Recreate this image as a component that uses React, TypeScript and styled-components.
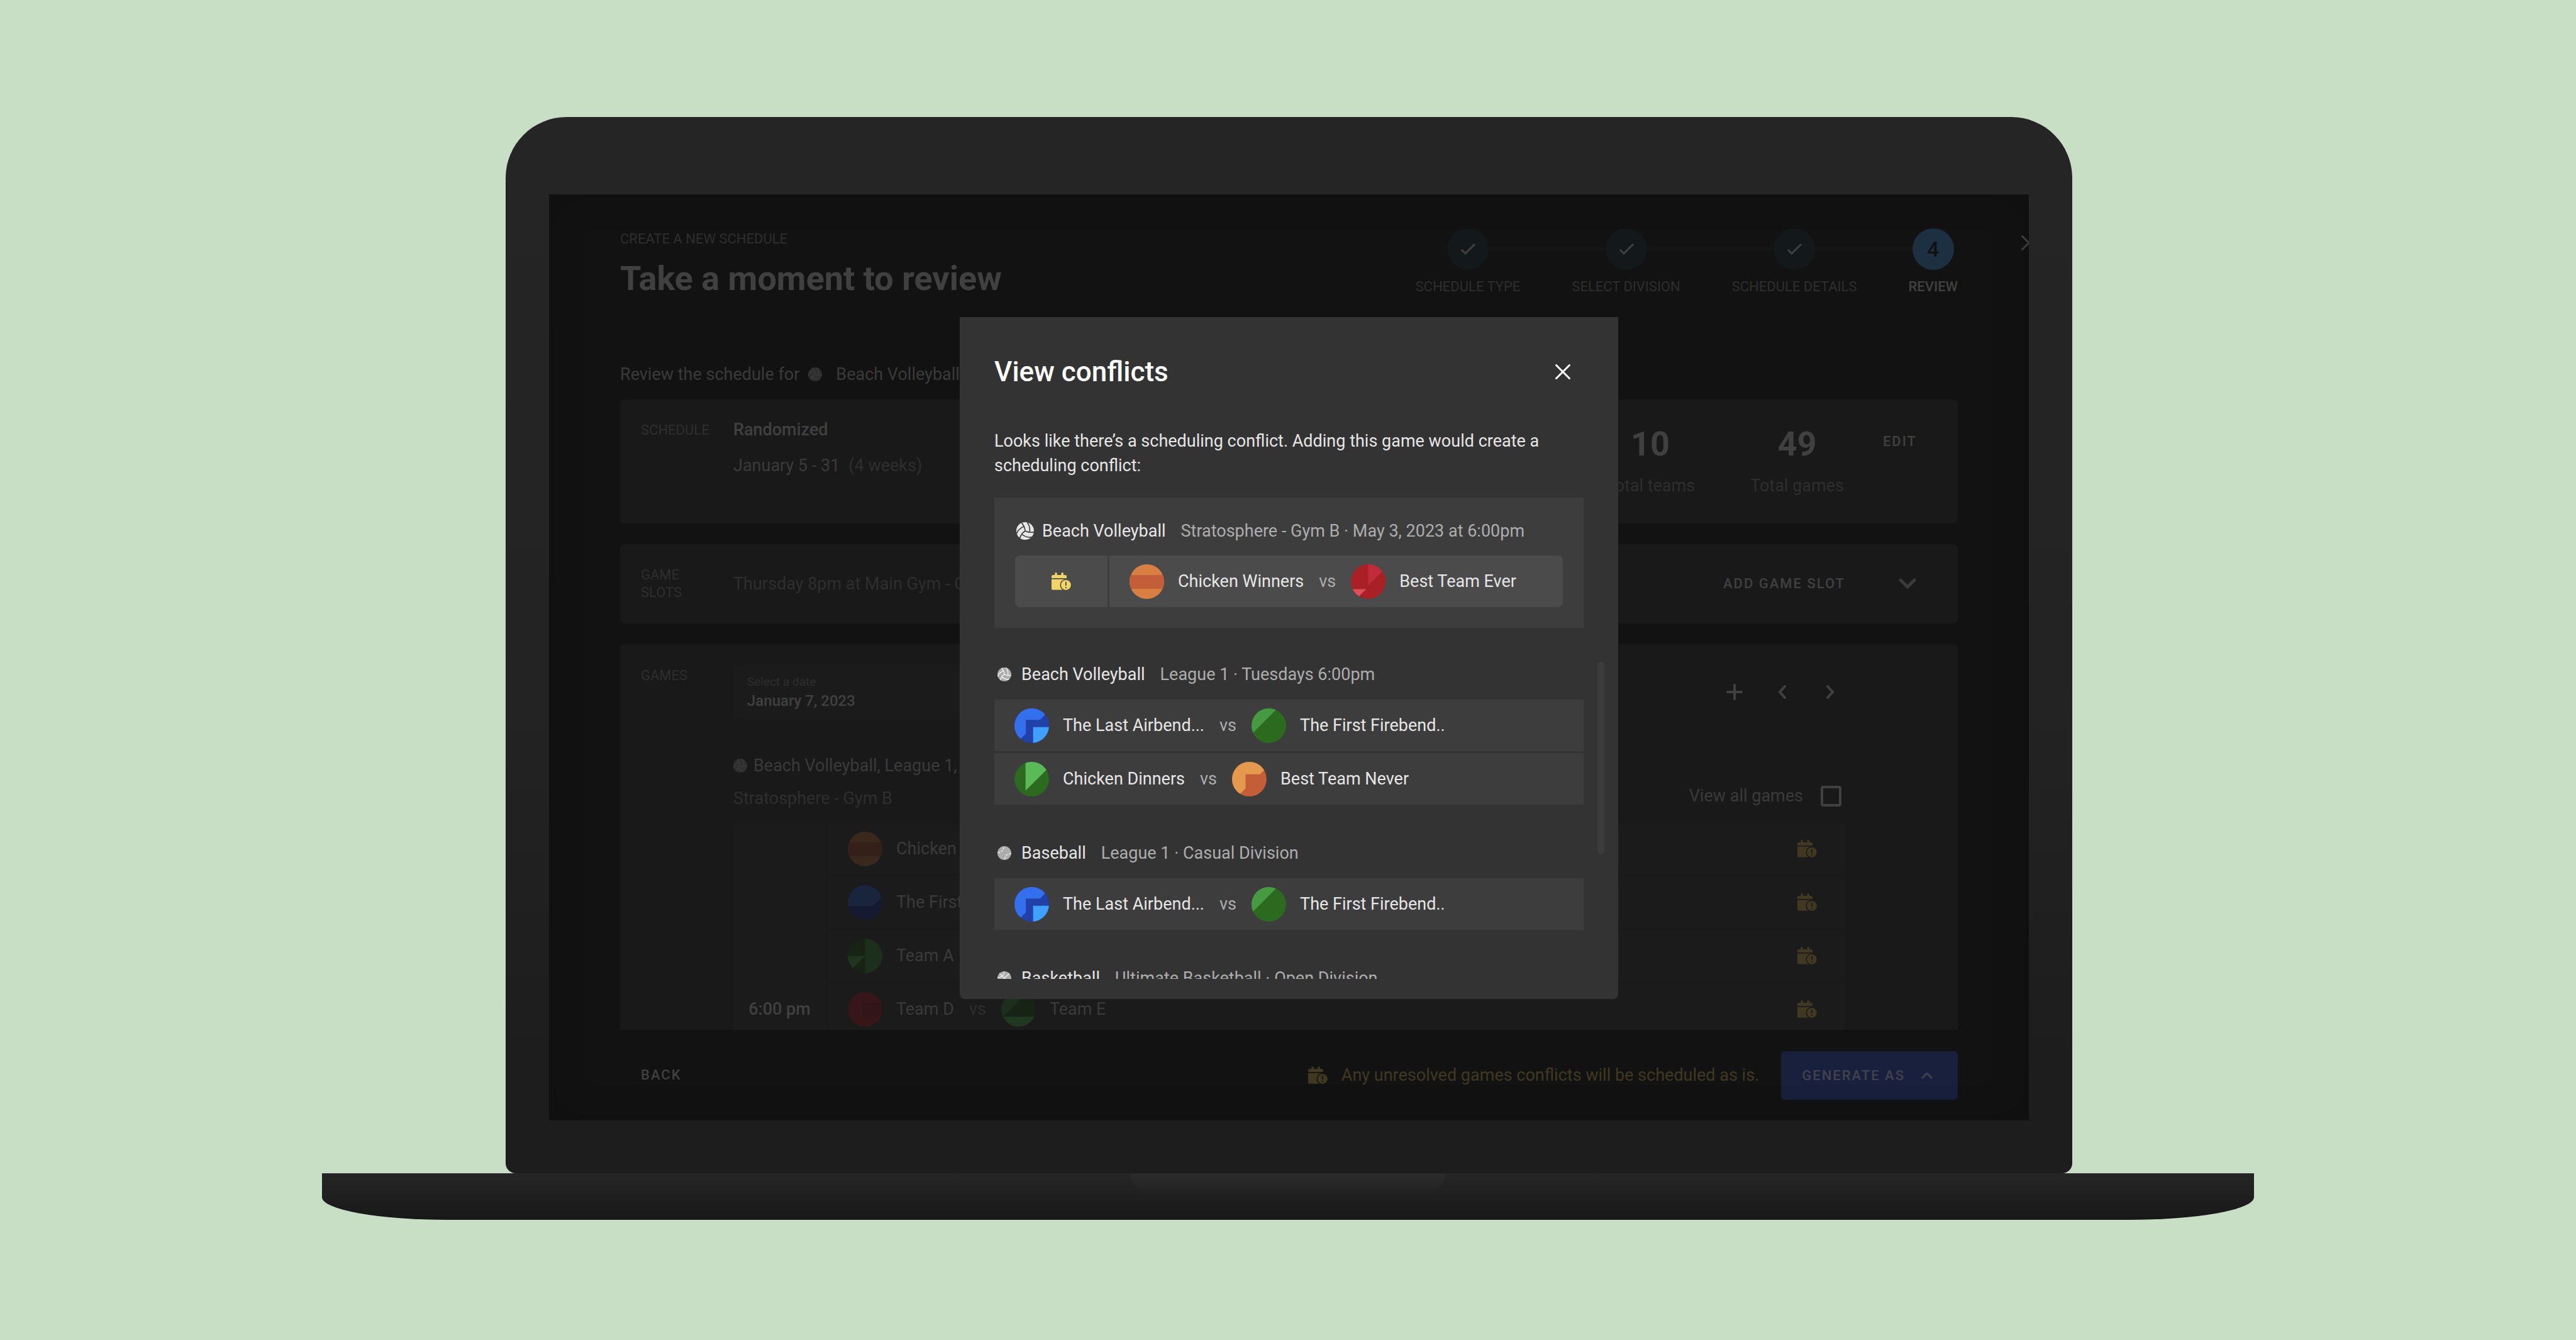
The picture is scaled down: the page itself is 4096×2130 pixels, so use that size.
import React, { useId } from "react";
import styled, { createGlobalStyle } from "styled-components";

const GlobalStyle = createGlobalStyle`
  *, *::before, *::after { box-sizing: border-box; }
  body { margin: 0; background: #c8dfc6; }
  body, button, input, select { font-family: Roboto, "Liberation Sans", sans-serif; }
  h1, h2, h3, p, dl, dd, dt, ul { margin: 0; padding: 0; }
  button { background: none; border: 0; padding: 0; cursor: pointer; }
`;

const ink = {
  strong: "#404040",
  medium: "#3a3a3a",
  soft: "#2e2e2e",
  card: "#191919",
  cell: "#1b1b1b",
  warning: "#403821",
};

/* ---------- Laptop ---------- */

const Stage = styled.div`
  min-height: 100vh;
  padding-top: 186px;
  background: #c8dfc6;
`;

const Laptop = styled.div`
  width: 75%;
  margin: 0 auto;
`;

const Lid = styled.div`
  margin: 0 289px 0 292px;
  padding: 123px 69px 84px;
  border-radius: 97px 97px 16px 16px;
  background: linear-gradient(#252525, #232323 55%, #1d1d1d 90%);
`;

const Base = styled.div`
  display: flex;
  justify-content: center;
  height: 74px;
  border-radius: 0 0 200px 200px / 0 0 36px 36px;
  background: linear-gradient(#262626, #181818);
`;

const Notch = styled.div`
  width: 500px;
  height: 37px;
  border-radius: 0 0 40px 40px;
  background: linear-gradient(#2c2c2c, #202020);
`;

const Screen = styled.div`
  position: relative;
  overflow: hidden;
  color: ${ink.medium};
  background: #121212;
  font-size: 27px;
  line-height: 40px;
`;

/* ---------- Page behind the dialog ---------- */

const Page = styled.div`
  padding: 54px 113px 0;
`;

const PageHeader = styled.header`
  display: flex;
  justify-content: space-between;
  align-items: flex-start;
  margin-bottom: 102px;
`;

const Heading = styled.div`
  display: grid;
  gap: 18px;
  padding-top: 2px;
`;

const Eyebrow = styled.p`
  color: ${ink.soft};
  font-size: 22px;
  line-height: 30px;
`;

const PageTitle = styled.h1`
  color: ${ink.strong};
  font-size: 54px;
  font-weight: 700;
  line-height: 60px;
`;

const Stepper = styled.ol`
  position: relative;
  display: flex;
  gap: 82px;
  margin: 0;
  padding: 0;
  list-style: none;

  &::before {
    content: "";
    position: absolute;
    top: 30px;
    left: 85px;
    right: 40px;
    height: 6px;
    background: #151515;
  }
`;

const Step = styled.li<{ $current?: boolean }>`
  position: relative;
  display: grid;
  justify-items: center;
  gap: 12px;
  color: ${(p) => (p.$current ? ink.strong : ink.soft)};
  font-size: 22px;
  font-weight: ${(p) => (p.$current ? 500 : 400)};
  line-height: 30px;
`;

const StepDot = styled.span<{ $current?: boolean }>`
  display: grid;
  place-items: center;
  width: 66px;
  height: 66px;
  border-radius: 50%;
  color: ${(p) => (p.$current ? "#111" : ink.strong)};
  background: ${(p) => (p.$current ? "#1d3042" : "#13181b")};
  font-size: 34px;
  font-weight: 500;
`;

const PageClose = styled.button`
  position: absolute;
  top: 64px;
  right: -13px;
  display: grid;
  color: ${ink.strong};
`;

const ReviewLine = styled.p`
  display: flex;
  align-items: center;
  gap: 22px;
  margin-bottom: 20px;
`;

const ReviewLead = styled.span`
  display: flex;
  align-items: center;
  gap: 14px;
`;

const Cards = styled.div`
  display: grid;
  gap: 33px;
`;

const Card = styled.section<{ $clip?: boolean }>`
  display: grid;
  grid-template-columns: 115px 1fr auto;
  column-gap: 32px;
  padding: ${(p) => (p.$clip ? "33px 33px 0" : "28px 65px 40px 33px")};
  height: ${(p) => (p.$clip ? "613px" : "auto")};
  overflow: hidden;
  border-radius: ${(p) => (p.$clip ? "8px 8px 0 0" : "8px")};
  background: ${ink.card};
`;

const SlotCard = styled(Card)`
  align-items: center;
  padding: 35px 65px 35px 33px;
`;

const CardLabel = styled.h2<{ $top?: number }>`
  padding-top: ${(p) => p.$top ?? 0}px;
  color: ${ink.soft};
  font-size: 22px;
  font-weight: 400;
  line-height: 28px;
`;

const Summary = styled.div`
  display: grid;
  align-content: start;
  gap: 17px;
`;

const SummaryTitle = styled.p`
  color: ${ink.strong};
  font-weight: 500;
`;

const Dates = styled.p`
  display: flex;
  gap: 14px;
`;

const Muted = styled.span`
  color: ${ink.soft};
`;

const Stats = styled.dl`
  display: flex;
  gap: 88px;
  padding-top: 13px;
`;

const Stat = styled.div`
  display: flex;
  flex-direction: column-reverse;
  gap: 16px;
  text-align: center;
`;

const StatName = styled.dt`
  color: ${ink.soft};
`;

const StatValue = styled.dd`
  color: ${ink.strong};
  font-size: 54px;
  font-weight: 700;
  line-height: 60px;
`;

const Actions = styled.div<{ $gap: number }>`
  display: flex;
  align-items: flex-start;
  gap: ${(p) => p.$gap}px;
`;

const TextButton = styled.button<{ $top?: number }>`
  margin-top: ${(p) => p.$top ?? 0}px;
  color: ${ink.strong};
  font-size: 22px;
  font-weight: 500;
  line-height: 30px;
  letter-spacing: 2px;
`;

const IconButton = styled.button<{ $size: number }>`
  display: grid;
  place-items: center;
  width: ${(p) => p.$size}px;
  height: ${(p) => p.$size}px;
  color: inherit;
`;

const Games = styled.div`
  grid-column: 2 / 4;
  padding-right: 146px;
`;

const GamesToolbar = styled.div`
  display: flex;
  justify-content: space-between;
  align-items: center;
  margin-bottom: 54px;
`;

const DateField = styled.label`
  display: block;
  width: 520px;
  padding: 15px 22px 11px;
  border-radius: 6px;
  color: ${ink.soft};
  background: ${ink.cell};
  font-size: 19px;
  line-height: 24px;
`;

const DateSelect = styled.select`
  display: block;
  width: 100%;
  height: 36px;
  padding: 0;
  border: 0;
  appearance: none;
  color: ${ink.strong};
  background: transparent;
  font-size: 24px;
  font-weight: 500;
`;

const DateNav = styled.div`
  display: flex;
  margin-right: -14px;
  color: ${ink.strong};
`;

const GroupHeader = styled.div`
  display: flex;
  justify-content: space-between;
  align-items: flex-end;
  margin-bottom: 19px;
`;

const GroupTitle = styled.div`
  display: grid;
  gap: 12px;
`;

const GroupName = styled.h3`
  display: flex;
  align-items: center;
  gap: 10px;
  font-size: 27px;
  font-weight: 400;
`;

const ViewAll = styled.label`
  display: flex;
  align-items: center;
  gap: 28px;
  padding: 0 6px 4px 0;
`;

const CheckBox = styled.input`
  appearance: none;
  width: 33px;
  height: 33px;
  margin: 0;
  border: 4px solid ${ink.strong};
  border-radius: 4px;
`;

const GameTable = styled.table`
  width: 100%;
  border-spacing: 0;
  border-radius: 6px 6px 0 0;
  background: ${ink.cell};
`;

const TimeCell = styled.td`
  width: 150px;
  height: 85px;
  padding: 0 0 3px;
  border-right: 3px solid #191919;
  color: ${ink.strong};
  font-weight: 500;
  text-align: center;
`;

const GameCell = styled.td`
  height: 85px;
  padding: 0 45px 0 32px;
  border-bottom: 3px solid #191919;
`;

const GameLine = styled.div`
  display: flex;
  justify-content: space-between;
  align-items: center;
  color: ${ink.warning};
`;

const Footer = styled.footer`
  display: flex;
  justify-content: space-between;
  align-items: center;
  height: 144px;
  padding: 0 113px 0 146px;
`;

const FooterActions = styled.div`
  display: flex;
  align-items: center;
  gap: 35px;
`;

const Warning = styled.p`
  display: flex;
  align-items: center;
  gap: 22px;
  color: ${ink.warning};
`;

const GenerateButton = styled.button`
  display: flex;
  align-items: center;
  gap: 26px;
  height: 77px;
  padding: 0 40px 0 33px;
  border-radius: 6px;
  color: #3f424d;
  background: #19203d;
  font-size: 22px;
  font-weight: 500;
  letter-spacing: 2px;
`;

/* ---------- Matchups ---------- */

const MatchupRow = styled.div<{ $dim?: boolean }>`
  display: flex;
  align-items: center;
  gap: 24px;
  color: ${(p) => (p.$dim ? ink.medium : "#e6e6e6")};
`;

const Team = styled.span`
  display: flex;
  align-items: center;
  gap: 22px;
`;

const Versus = styled.span<{ $dim?: boolean }>`
  color: ${(p) => (p.$dim ? ink.soft : "#adadad")};
`;

/* ---------- Dialog ---------- */

const Backdrop = styled.div`
  position: absolute;
  inset: 0;
  display: grid;
  place-items: center;
  padding-top: 2px;
  box-shadow: inset 0 0 60px rgba(0, 0, 0, 0.15);
`;

const Dialog = styled.div`
  width: 1047px;
  padding: 55px 55px 32px;
  border-radius: 0 0 8px 8px;
  color: #e6e6e6;
  background: #333;
`;

const DialogHeader = styled.div`
  display: flex;
  justify-content: space-between;
  align-items: center;
  height: 64px;
  margin-bottom: 59px;
  padding-right: 8px;
  color: #fff;
`;

const DialogTitle = styled.h2`
  font-size: 44px;
  font-weight: 500;
  line-height: 64px;
`;

const DialogText = styled.p`
  margin-bottom: 31px;
  line-height: 39px;
`;

const Highlight = styled.section`
  padding: 33px;
  background: #3d3d3d;
`;

const Pending = styled.div`
  display: grid;
  grid-template-columns: 147px 1fr;
  gap: 3px;
  margin-top: 20px;
`;

const PendingCell = styled.div<{ $end?: boolean }>`
  display: flex;
  align-items: center;
  justify-content: ${(p) => (p.$end ? "flex-start" : "center")};
  height: 82px;
  padding: 0 32px;
  border-radius: ${(p) => (p.$end ? "0 8px 8px 0" : "8px 0 0 8px")};
  color: #f1d667;
  background: #4b4b4b;
`;

const ConflictHeader = styled.h3`
  display: flex;
  align-items: center;
  gap: 24px;
  height: 39px;
  font-size: 27px;
  font-weight: 400;
`;

const Sport = styled.span`
  display: flex;
  align-items: center;
  gap: 12px;
`;

const SportIcon = styled.span`
  display: grid;
  place-items: center;
  width: 31px;
  height: 39px;
`;

const Detail = styled.span`
  color: #adadad;
`;

const ScrollArea = styled.div`
  display: flex;
  gap: 22px;
  height: 504px;
  margin: 54px -33px 0 0;
`;

const ConflictList = styled.div`
  flex: 1;
  display: grid;
  align-content: start;
  gap: 57px;
  overflow-y: auto;
  scrollbar-width: none;
`;

const ConflictRows = styled.div`
  display: grid;
  gap: 3px;
  margin-top: 21px;
`;

const ConflictRow = styled.div`
  display: flex;
  align-items: center;
  height: 82px;
  padding: 0 32px;
  background: #3d3d3d;
`;

const ScrollThumb = styled.div`
  width: 11px;
  height: 306px;
  border-radius: 6px;
  background: #3c3c3c;
`;

/* ---------- Drawings ---------- */

type BallKind = "volleyball" | "baseball" | "basketball";

function Seams({ kind }: { kind: BallKind }) {
  if (kind === "baseball") {
    return <path strokeDasharray="17 8" d="M-49 -4Q-4 -6 -3 -50M49 2Q4 6 3 50" />;
  }
  if (kind === "basketball") {
    return <path d="M-36 -36L36 36M36 -36L-36 36M-49 -5Q-4 -6 -1 -50M49 5Q4 6 1 50" />;
  }
  return (
    <>
      {[0, 120, 240].map((turn) => (
        <path key={turn} transform={`rotate(${turn})`} d="M-20 -46Q-2 -28 0 0M11 -49Q29 -32 26 7" />
      ))}
    </>
  );
}

function Ball({ kind, size = 22, fill, seam, weight = 5 }: { kind: BallKind; size?: number; fill: string; seam: string; weight?: number }) {
  return (
    <svg width={size} height={size} viewBox="-50 -50 100 100" aria-hidden="true">
      <circle r="50" fill={fill} />
      <g fill="none" stroke={seam} strokeWidth={weight}>
        <Seams kind={kind} />
      </g>
    </svg>
  );
}

function CalendarAlert() {
  const id = useId();
  return (
    <svg width="31" height="28" viewBox="0 0 134 119" fill="currentColor" aria-hidden="true">
      <mask id={id}>
        <rect width="134" height="119" fill="#fff" />
        <circle cx="99" cy="85" r="41" fill="#000" />
      </mask>
      <path d="M0 38V26a10 10 0 0 1 10-10h13V7a7 7 0 0 1 15 0v9h29V7a7 7 0 0 1 15 0v9h12a10 10 0 0 1 10 10v12z" />
      <path mask={`url(#${id})`} d="M0 45h104v74H11a11 11 0 0 1-11-11z" />
      <path
        fillRule="evenodd"
        d="M99 51a34 34 0 1 1 0 68a34 34 0 1 1 0-68zM95 66v20a4 4 0 0 0 8 0v-20a4 4 0 0 0-8 0zM99 97a5 5 0 1 0 0 10a5 5 0 1 0 0-10z"
      />
    </svg>
  );
}

function Cross() {
  return (
    <svg width="26" height="26" viewBox="0 0 26 26" stroke="currentColor" strokeWidth="3" strokeLinecap="round" aria-hidden="true">
      <path d="M2.500 2.500L23.500 23.500M23.500 2.500L2.500 23.500" />
    </svg>
  );
}

function Check() {
  return (
    <svg width="26" height="20" viewBox="0 0 26 20" fill="none" stroke="currentColor" strokeWidth="3" aria-hidden="true">
      <path d="M3 11L9 17L24 2" />
    </svg>
  );
}

function Plus() {
  return (
    <svg width="26" height="26" viewBox="0 0 26 26" stroke="currentColor" strokeWidth="4" strokeLinecap="round" aria-hidden="true">
      <path d="M13 2V24M2 13H24" />
    </svg>
  );
}

const chevrons = {
  left: { w: 14, h: 22, d: "M11 2L3 11L11 20" },
  right: { w: 14, h: 22, d: "M3 2L11 11L3 20" },
  down: { w: 28, h: 18, d: "M3 3L14 14L25 3" },
  up: { w: 18, h: 12, d: "M2 10L9 3L16 10" },
};

function Chevron({ to, weight }: { to: keyof typeof chevrons; weight: number }) {
  const { w, h, d } = chevrons[to];
  return (
    <svg width={w} height={h} viewBox={`0 0 ${w} ${h}`} fill="none" stroke="currentColor" strokeWidth={weight} strokeLinecap="round" aria-hidden="true">
      <path d={d} />
    </svg>
  );
}

type Shape = { d: string; fill: string };
type Badge = { base: string; shapes: Shape[] };

const badges: Record<string, Badge> = {
  winners: { base: "#d88043", shapes: [{ fill: "#c35e38", d: "M0 31H100V71H0z" }] },
  ever: {
    base: "#a92127",
    shapes: [
      { fill: "#c02c3a", d: "M50 0V61L111 0z" },
      { fill: "#de4e59", d: "M0 72H44L10 106z" },
    ],
  },
  airbender: {
    base: "#2140a8",
    shapes: [
      { fill: "#3470ee", d: "M0 0H100V6L74 33H33V73L6 100H0z" },
      { fill: "#3fa0ff", d: "M54 54H100V100H54z" },
    ],
  },
  firebender: { base: "#2c6a20", shapes: [{ fill: "#459a42", d: "M0 0H75L0 75z" }] },
  dinners: { base: "#2c6a20", shapes: [{ fill: "#5aba58", d: "M32 0H116L32 83z" }] },
  never: { base: "#c35e38", shapes: [{ fill: "#e5994e", d: "M0 0H100V17L81 36H39V77L16 100H0z" }] },
  winnersDim: { base: "#3a281c", shapes: [{ fill: "#351f19", d: "M0 31H100V71H0z" }] },
  blueDim: { base: "#151a30", shapes: [{ fill: "#19243d", d: "M0 0H100V34L72 61H0z" }] },
  teamA: {
    base: "#172315",
    shapes: [
      { fill: "#1c2e1c", d: "M50 0H100V100H50z" },
      { fill: "#1f3520", d: "M0 50H50L0 100z" },
    ],
  },
  teamD: { base: "#371619", shapes: [{ fill: "#301618", d: "M42 31H100V69H42z" }] },
  teamE: {
    base: "#172315",
    shapes: [
      { fill: "#1c2e1c", d: "M0 0H77L0 77z" },
      { fill: "#203720", d: "M0 71H100V100H0z" },
    ],
  },
};

function Avatar({ name }: { name: string }) {
  const id = useId();
  const badge = badges[name];
  return (
    <svg width="55" height="55" viewBox="0 0 100 100" aria-hidden="true">
      <clipPath id={id}>
        <circle cx="50" cy="50" r="50" />
      </clipPath>
      <g clipPath={`url(#${id})`}>
        <rect width="100" height="100" fill={badge.base} />
        {badge.shapes.map((s) => (
          <path key={s.d} d={s.d} fill={s.fill} />
        ))}
      </g>
    </svg>
  );
}

/* ---------- Composition ---------- */

type Side = [name: string, badge: string];

function Matchup({ home, away, dim }: { home: Side; away: Side; dim?: boolean }) {
  return (
    <MatchupRow $dim={dim}>
      <Team>
        <Avatar name={home[1]} />
        {home[0]}
      </Team>
      <Versus $dim={dim}>vs</Versus>
      <Team>
        <Avatar name={away[1]} />
        {away[0]}
      </Team>
    </MatchupRow>
  );
}

const games: { time?: string; home: Side; away: Side }[] = [
  { home: ["Chicken Winners", "winnersDim"], away: ["Best Team Ever", "teamD"] },
  { home: ["The First Firebend..", "blueDim"], away: ["Team C", "teamE"] },
  { home: ["Team A", "teamA"], away: ["Team B", "blueDim"] },
  { time: "6:00 pm", home: ["Team D", "teamD"], away: ["Team E", "teamE"] },
];

const airVsFire: { home: Side; away: Side } = {
  home: ["The Last Airbend...", "airbender"],
  away: ["The First Firebend..", "firebender"],
};

const conflicts: { kind: BallKind; sport: string; detail: string; rows: { home: Side; away: Side }[] }[] = [
  {
    kind: "volleyball",
    sport: "Beach Volleyball",
    detail: "League 1 · Tuesdays 6:00pm",
    rows: [airVsFire, { home: ["Chicken Dinners", "dinners"], away: ["Best Team Never", "never"] }],
  },
  { kind: "baseball", sport: "Baseball", detail: "League 1 · Casual Division", rows: [airVsFire] },
  { kind: "basketball", sport: "Basketball", detail: "Ultimate Basketball · Open Division", rows: [] },
];

const steps = ["SCHEDULE TYPE", "SELECT DIVISION", "SCHEDULE DETAILS", "REVIEW"];

function ReviewPage() {
  return (
    <>
      <Page>
        <PageHeader>
          <Heading>
            <Eyebrow>CREATE A NEW SCHEDULE</Eyebrow>
            <PageTitle>Take a moment to review</PageTitle>
          </Heading>
          <Stepper>
            {steps.map((label, i) => {
              const current = i === steps.length - 1;
              return (
                <Step key={label} $current={current}>
                  <StepDot $current={current}>{current ? i + 1 : <Check />}</StepDot>
                  {label}
                </Step>
              );
            })}
          </Stepper>
        </PageHeader>

        <ReviewLine>
          <ReviewLead>
            Review the schedule for
            <Ball kind="volleyball" fill="#2e2e2e" seam="#3c3c3c" />
          </ReviewLead>
          Beach Volleyball
        </ReviewLine>

        <Cards>
          <Card>
            <CardLabel $top={7}>SCHEDULE</CardLabel>
            <Summary>
              <SummaryTitle>Randomized</SummaryTitle>
              <Dates>
                January 5 - 31 <Muted>(4 weeks)</Muted>
              </Dates>
            </Summary>
            <Actions $gap={62}>
              <Stats>
                <Stat>
                  <StatName>Total teams</StatName>
                  <StatValue>10</StatValue>
                </Stat>
                <Stat>
                  <StatName>Total games</StatName>
                  <StatValue>49</StatValue>
                </Stat>
              </Stats>
              <TextButton type="button" $top={24}>EDIT</TextButton>
            </Actions>
          </Card>

          <SlotCard>
            <CardLabel>GAME SLOTS</CardLabel>
            <Muted>Thursday 8pm at Main Gym - Court 1</Muted>
            <Actions $gap={84}>
              <TextButton type="button">ADD GAME SLOT</TextButton>
              <IconButton type="button" $size={30} aria-label="Expand game slots">
                <Chevron to="down" weight={5} />
              </IconButton>
            </Actions>
          </SlotCard>

          <Card $clip>
            <CardLabel $top={3}>GAMES</CardLabel>
            <Games>
              <GamesToolbar>
                <DateField>
                  Select a date
                  <DateSelect>
                    <option>January 7, 2023</option>
                  </DateSelect>
                </DateField>
                <DateNav>
                  <IconButton type="button" $size={76} aria-label="Add game"><Plus /></IconButton>
                  <IconButton type="button" $size={76} aria-label="Previous date"><Chevron to="left" weight={4} /></IconButton>
                  <IconButton type="button" $size={76} aria-label="Next date"><Chevron to="right" weight={4} /></IconButton>
                </DateNav>
              </GamesToolbar>
              <GroupHeader>
                <GroupTitle>
                  <GroupName>
                    <Ball kind="volleyball" fill="#2f2f2f" seam="#3c3c3c" />
                    Beach Volleyball, League 1,
                  </GroupName>
                  <Muted>Stratosphere - Gym B</Muted>
                </GroupTitle>
                <ViewAll>
                  View all games
                  <CheckBox type="checkbox" />
                </ViewAll>
              </GroupHeader>
              <GameTable>
                <tbody>
                  {games.map((game) => (
                    <tr key={game.home[0]}>
                      <TimeCell>{game.time}</TimeCell>
                      <GameCell>
                        <GameLine>
                          <Matchup home={game.home} away={game.away} dim />
                          <CalendarAlert />
                        </GameLine>
                      </GameCell>
                    </tr>
                  ))}
                </tbody>
              </GameTable>
            </Games>
          </Card>
        </Cards>
      </Page>

      <Footer>
        <TextButton type="button">BACK</TextButton>
        <FooterActions>
          <Warning>
            <CalendarAlert />
            Any unresolved games conflicts will be scheduled as is.
          </Warning>
          <GenerateButton type="button">
            GENERATE AS
            <Chevron to="up" weight={3} />
          </GenerateButton>
        </FooterActions>
      </Footer>
      <PageClose type="button" aria-label="Close schedule">
        <Cross />
      </PageClose>
    </>
  );
}

function ConflictDialog() {
  return (
    <Backdrop>
      <Dialog role="dialog" aria-labelledby="dialog-title">
        <DialogHeader>
          <DialogTitle id="dialog-title">View conflicts</DialogTitle>
          <IconButton type="button" $size={50} aria-label="Close">
            <Cross />
          </IconButton>
        </DialogHeader>
        <DialogText>
          Looks like there’s a scheduling conflict. Adding this game would create a scheduling conflict:
        </DialogText>
        <Highlight>
          <ConflictHeader>
            <Sport>
              <SportIcon>
                <Ball kind="volleyball" size={28} fill="#e6e6e6" seam="#3d3d3d" weight={6} />
              </SportIcon>
              Beach Volleyball
            </Sport>
            <Detail>Stratosphere - Gym B · May 3, 2023 at 6:00pm</Detail>
          </ConflictHeader>
          <Pending>
            <PendingCell>
              <CalendarAlert />
            </PendingCell>
            <PendingCell $end>
              <Matchup home={["Chicken Winners", "winners"]} away={["Best Team Ever", "ever"]} />
            </PendingCell>
          </Pending>
        </Highlight>
        <ScrollArea>
          <ConflictList>
            {conflicts.map((c) => (
              <section key={c.sport}>
                <ConflictHeader>
                  <Sport>
                    <SportIcon>
                      <Ball kind={c.kind} fill="#adadad" seam="#fff" />
                    </SportIcon>
                    {c.sport}
                  </Sport>
                  <Detail>{c.detail}</Detail>
                </ConflictHeader>
                <ConflictRows>
                  {c.rows.map((row) => (
                    <ConflictRow key={row.home[0]}>
                      <Matchup home={row.home} away={row.away} />
                    </ConflictRow>
                  ))}
                </ConflictRows>
              </section>
            ))}
          </ConflictList>
          <ScrollThumb />
        </ScrollArea>
      </Dialog>
    </Backdrop>
  );
}

export default function App() {
  return (
    <Stage>
      <GlobalStyle />
      <Laptop>
        <Lid>
          <Screen>
            <ReviewPage />
            <ConflictDialog />
          </Screen>
        </Lid>
        <Base>
          <Notch />
        </Base>
      </Laptop>
    </Stage>
  );
}
